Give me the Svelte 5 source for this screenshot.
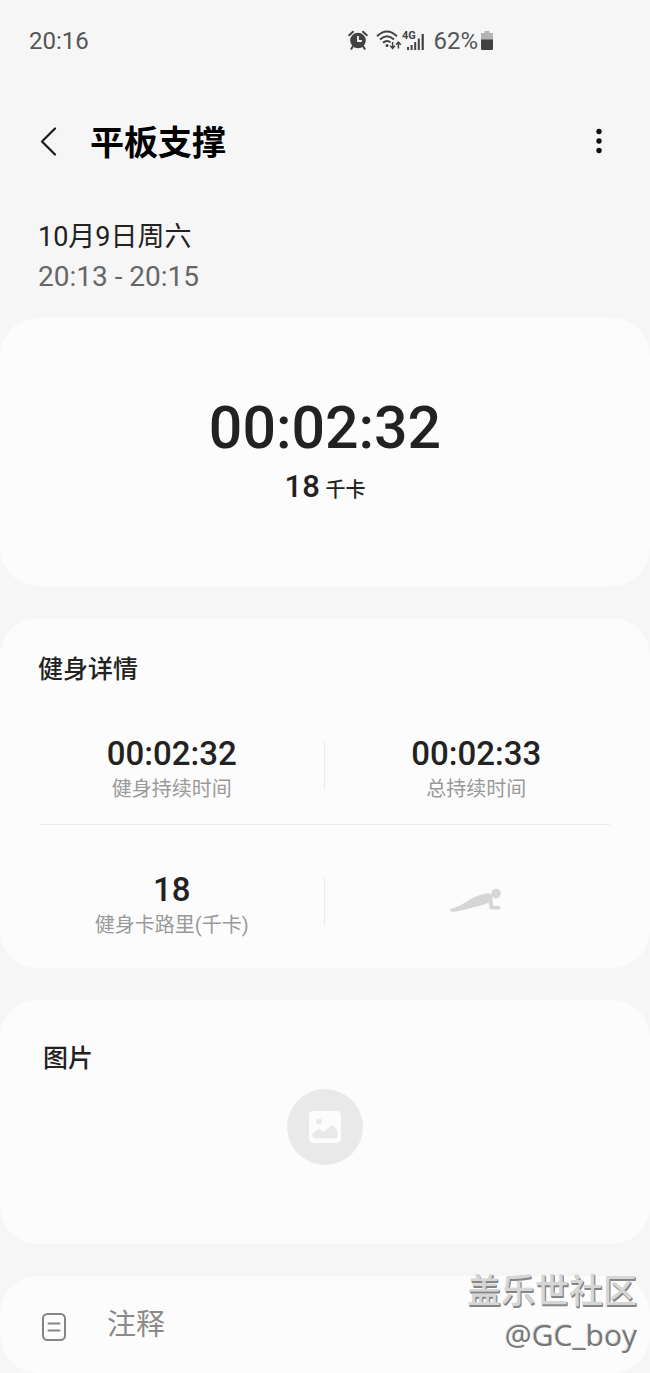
<script>
  let workout = $state({
    name: '平板支撑',
    date: '10月9日周六',
    range: '20:13 - 20:15',
    duration: '00:02:32',
    total: '00:02:33',
    calories: 18
  });
  let note = $state('');
</script>

<div class="page">
  <div class="status">
    <span>20:16</span>
    <div class="status-right">
      <svg width="20" height="22" viewBox="0 0 20 22" aria-hidden="true">
        <circle cx="10" cy="10.5" r="7.8" fill="#414141" />
        <path d="M1.2 5.2 5 1.8M18.8 5.2 15 1.8M4.8 16.5 3.4 18.8M15.2 16.5l1.4 2.3" stroke="#414141" stroke-width="2" fill="none" stroke-linecap="round" />
        <path d="M10 6v5h3.8" stroke="#f7f7f7" stroke-width="1.8" fill="none" />
      </svg>
      <svg class="wifi" width="26" height="22" viewBox="0 0 26 22" fill="none" stroke="#414141" stroke-width="1.9" aria-hidden="true">
        <path d="M1 6.2Q11 -3.4 21 6.2M4 9.5Q11 3 18 9.5M7 12.8Q11 9.2 14.6 12.4" />
        <circle cx="11" cy="15.6" r="1.5" fill="#414141" stroke="none" />
        <path d="M16.6 12v6M14.2 15.8l2.4 2.6 2.4-2.6M22.4 18.5v-6M20 14.7l2.4-2.6 2.4 2.6" stroke-width="1.5" />
      </svg>
      <svg class="signal" width="24" height="22" viewBox="0 0 24 22" fill="#414141" aria-hidden="true">
        <text x="0" y="9" font-size="11" font-weight="700">4G</text>
        <path d="M5 17h2v3H5zM8.6 15h2v5h-2zM12.2 12h2v8h-2zM15.8 8.5h2V20h-2zM19.6 4h2.2v16h-2.2z" />
      </svg>
      <span>62%</span>
      <svg class="battery" width="14" height="20" viewBox="0 0 14 20" aria-hidden="true">
        <path d="M4.5 0h5v2H13v7H1V2h3.5z" fill="#b4b4b4" />
        <path d="M1 8.5h12V18a1 1 0 0 1-1 1H2a1 1 0 0 1-1-1z" fill="#414141" />
      </svg>
    </div>
  </div>

  <header>
    <button aria-label="返回">
      <svg width="20" height="30" viewBox="0 0 20 30" fill="none" stroke="#1a1a1a" stroke-width="2.2" stroke-linecap="round" stroke-linejoin="round">
        <path d="M16 1.500 3 14.500l13 13" />
      </svg>
    </button>
    <h1>{workout.name}</h1>
    <button class="more" aria-label="更多选项">
      <svg width="10" height="28" viewBox="0 0 10 28" fill="#111">
        <circle cx="5" cy="3.5" r="2.7" />
        <circle cx="5" cy="13" r="2.7" />
        <circle cx="5" cy="22.5" r="2.7" />
      </svg>
    </button>
  </header>

  <div class="when">
    <div class="date">{workout.date}</div>
    <div class="range">{workout.range}</div>
  </div>

  <main>
    <section class="card summary">
      <div class="big">{workout.duration}</div>
      <div class="kcal">{workout.calories} <small>千卡</small></div>
    </section>

    <section class="card details">
      <h2>健身详情</h2>
      <div class="row">
        <div class="cell">
          <strong>{workout.duration}</strong>
          <span>健身持续时间</span>
        </div>
        <div class="divider"></div>
        <div class="cell">
          <strong>{workout.total}</strong>
          <span>总持续时间</span>
        </div>
      </div>
      <hr />
      <div class="row">
        <div class="cell">
          <strong>{workout.calories}</strong>
          <span>健身卡路里(千卡)</span>
        </div>
        <div class="divider"></div>
        <div class="cell pose">
          <svg width="52" height="26" viewBox="0 0 52 26" fill="#d6d6d6" aria-hidden="true">
            <circle cx="46" cy="5.6" r="4.8" />
            <path d="M1.5 20.6C8 19 13 16 19 12 24 8.600 31 6 37.500 5.200c2.400-.2 4.300 1.200 4.600 3.400l1.200 9.400h5.400c2.400 0 2.400 3.600 0 3.600h-7.300c-1.200 0-1.900-.6-2.100-1.800L38.600 14.400c-5 2.800-10 3.600-16 5-6 1.400-12 3.800-19.800 4.400C-.2 24-.6 21.200 1.500 20.600z" />
          </svg>
        </div>
      </div>
    </section>

    <section class="card photos">
      <h2>图片</h2>
      <button class="add-photo" aria-label="添加图片">
        <svg width="32" height="32" viewBox="0 0 32 32">
          <rect width="32" height="32" rx="4.5" fill="#fcfcfc" />
          <circle cx="10" cy="10.5" r="3" fill="#e9e9e9" />
          <path d="M3.500 26v-3.500l5-4q1.500-1.200 3 0l3.500 2.500 6.500-6q1.500-1.200 3 0l4 4.500v6q0 2-2 2h-21q-2 0-2-1.500z" fill="#e9e9e9" />
        </svg>
      </button>
    </section>

    <label class="card note">
      <svg width="26" height="34" viewBox="0 -4 26 34" fill="none" stroke="#858585" stroke-width="2" stroke-linecap="round" aria-hidden="true">
        <rect x="2" y="2" width="22" height="26" rx="4.5" />
        <path d="M7.500 11.500h11M7.500 18.500h11" />
      </svg>
      <input type="text" placeholder="注释" aria-label="注释" bind:value={note} />
    </label>
  </main>

  <div class="watermark">
    <div class="community">盖乐世社区</div>
    <div class="user">@GC_boy</div>
  </div>
</div>

<style>
  :global(body) {
    background: #f6f6f6;
  }

  .page {
    position: relative;
    font-family: Roboto, "Noto Sans CJK SC", sans-serif;
    color: #222;
    background: #f6f6f6;
  }

  button {
    display: flex;
    align-items: center;
    justify-content: center;
    padding: 0;
    border: none;
    background: none;
    cursor: pointer;
  }

  .status {
    display: flex;
    justify-content: space-between;
    align-items: center;
    height: 82px;
    padding: 0 24% 0 29px;
    font-size: 24px;
    color: #555;
  }

  .status-right {
    display: flex;
    align-items: center;
  }

  .wifi {
    margin-left: 8px;
  }

  .signal {
    margin-right: 7px;
  }

  .battery {
    margin-left: 2px;
  }

  header {
    display: flex;
    align-items: center;
    height: 120px;
    padding: 0 46px 0 39px;
  }

  h1 {
    margin: 0 0 0 31px;
    padding-top: 2px;
    font-size: 34px;
    line-height: 48px;
    font-weight: 700;
    color: #000;
  }

  .more {
    margin-left: auto;
  }

  .when {
    padding: 16px 38px 22px;
    line-height: 39px;
  }

  .date {
    font-size: 27px;
  }

  .range {
    font-size: 28px;
    color: #666;
  }

  main {
    display: flex;
    flex-direction: column;
    gap: 32px;
  }

  .card {
    box-sizing: border-box;
    border-radius: 38px;
    background: #fcfcfc;
  }

  .summary {
    padding: 73px 38px 74px;
    text-align: center;
    font-weight: 500;
  }

  .big {
    font-size: 59px;
    line-height: 74px;
  }

  .kcal {
    font-size: 31px;
    line-height: 44px;
  }

  .kcal small {
    margin-left: -2px;
    font-size: 20px;
  }

  h2 {
    margin: 0;
    font-size: 25px;
    line-height: 38px;
    font-weight: 500;
  }

  .details {
    padding: 33px 20px 8px;
  }

  .details h2 {
    padding-left: 18px;
  }

  .row {
    display: grid;
    grid-template-columns: 1fr 1px 1fr;
    align-items: start;
    padding: 47px 2px 18px 0;
  }

  hr {
    height: 1px;
    margin: 0 20px;
    border: none;
    background: #ebebeb;
  }

  .divider {
    height: 48px;
    margin: 5px 0;
    background: #ebebeb;
  }

  .cell {
    display: flex;
    flex-direction: column;
    align-items: center;
  }

  .cell strong {
    font-size: 33px;
    line-height: 36px;
    font-weight: 500;
  }

  .cell span {
    font-size: 20px;
    line-height: 34px;
    color: #999;
  }

  .pose {
    height: 58px;
    justify-content: center;
  }

  .photos {
    padding: 40px 43px 79px;
  }

  .add-photo {
    width: 76px;
    height: 76px;
    margin: 11px auto 0;
    border-radius: 50%;
    background: #e9e9e9;
  }

  .note {
    display: flex;
    align-items: center;
    gap: 40px;
    height: 97px;
    padding: 0 41px;
  }

  .note input {
    flex: 1;
    min-width: 0;
    padding: 0;
    border: none;
    outline: none;
    background: none;
    font: inherit;
    font-size: 29px;
    line-height: 44px;
    color: #222;
  }

  .note input::placeholder {
    color: #8a8a8a;
    opacity: 1;
  }

  .watermark {
    position: absolute;
    right: 13px;
    bottom: 18px;
    text-align: right;
    pointer-events: none;
  }

  .community {
    font-size: 34px;
    line-height: 48px;
    font-weight: 500;
    color: #d6d6d6;
    text-shadow: 1px 1px 0 #858585, 1px 2px 0 #858585;
  }

  .user {
    font-family: "Open Sans", "Noto Sans", sans-serif;
    font-size: 30px;
    line-height: 40px;
    color: #777;
    text-shadow: -1px -1px 0 #ddd;
  }
</style>
